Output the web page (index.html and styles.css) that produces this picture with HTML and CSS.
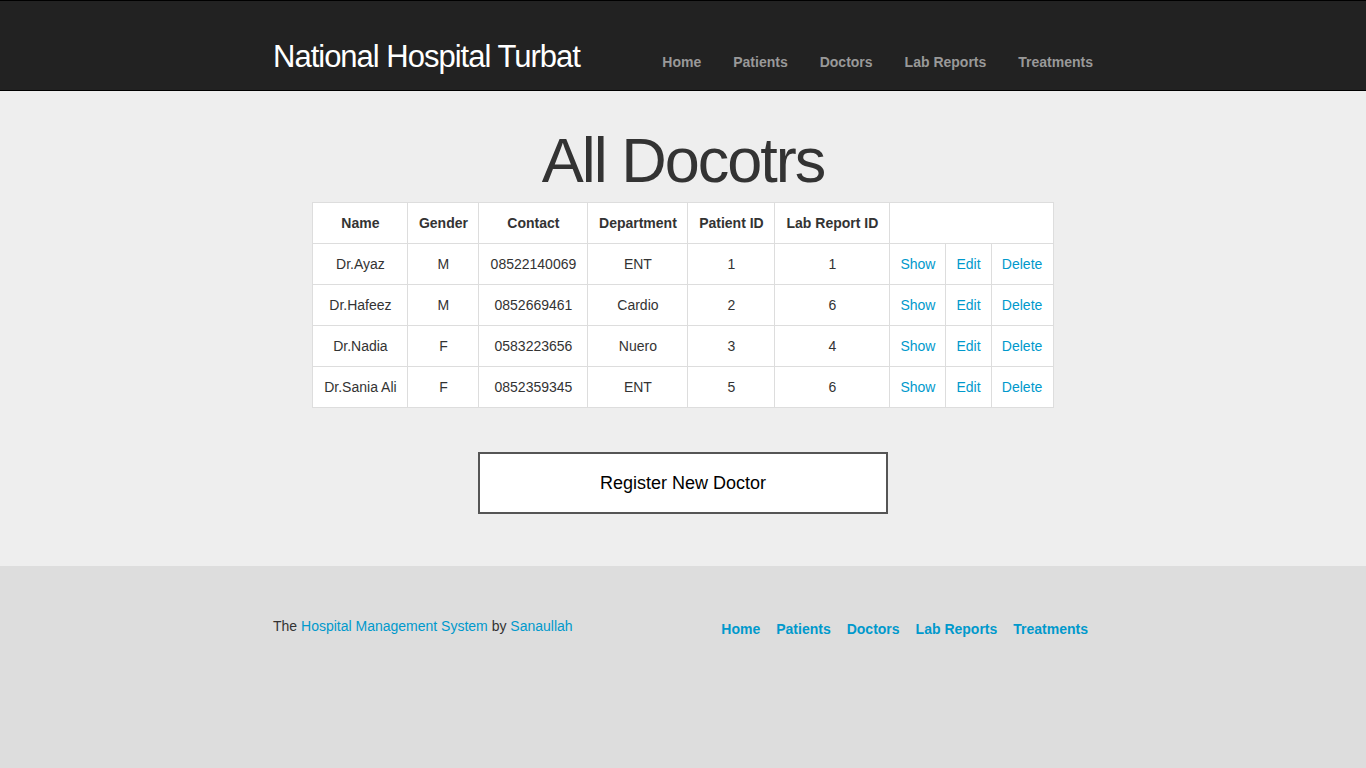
FILE: index.html
```html
<!DOCTYPE html>
<html lang="en">
<head>
<meta charset="utf-8">
<title>National Hospital Turbat</title>
<link rel="stylesheet" href="styles.css">
</head>
<body>
<header class="navbar">
  <div class="container navbar-inner">
    <a class="logo" href="#">National Hospital Turbat</a>
    <nav class="nav" aria-label="Main">
      <a href="#">Home</a>
      <a href="#">Patients</a>
      <a href="#">Doctors</a>
      <a href="#">Lab Reports</a>
      <a href="#">Treatments</a>
    </nav>
  </div>
</header>
<main class="hero">
  <h1>All Docotrs</h1>
  <table class="doctors">
    <colgroup>
      <col class="col-name"><col class="col-gender"><col class="col-contact"><col class="col-department"><col class="col-patient"><col class="col-report"><col class="col-show"><col class="col-edit"><col class="col-delete">
    </colgroup>
    <thead>
      <tr><th>Name</th><th>Gender</th><th>Contact</th><th>Department</th><th>Patient ID</th><th>Lab Report ID</th><th colspan="3"></th></tr>
    </thead>
    <tbody>
      <tr><td>Dr.Ayaz</td><td>M</td><td>08522140069</td><td>ENT</td><td>1</td><td>1</td><td><a href="#">Show</a></td><td><a href="#">Edit</a></td><td><a href="#">Delete</a></td></tr>
      <tr><td>Dr.Hafeez</td><td>M</td><td>0852669461</td><td>Cardio</td><td>2</td><td>6</td><td><a href="#">Show</a></td><td><a href="#">Edit</a></td><td><a href="#">Delete</a></td></tr>
      <tr><td>Dr.Nadia</td><td>F</td><td>0583223656</td><td>Nuero</td><td>3</td><td>4</td><td><a href="#">Show</a></td><td><a href="#">Edit</a></td><td><a href="#">Delete</a></td></tr>
      <tr><td>Dr.Sania Ali</td><td>F</td><td>0852359345</td><td>ENT</td><td>5</td><td>6</td><td><a href="#">Show</a></td><td><a href="#">Edit</a></td><td><a href="#">Delete</a></td></tr>
    </tbody>
  </table>
  <a class="register" href="#">Register New Doctor</a>
</main>
<footer class="footer">
  <div class="container footer-inner">
    <p class="credit">The <a href="#">Hospital Management System</a> by <a href="#">Sanaullah</a></p>
    <nav class="footer-nav" aria-label="Footer">
      <a href="#">Home</a>
      <a href="#">Patients</a>
      <a href="#">Doctors</a>
      <a href="#">Lab Reports</a>
      <a href="#">Treatments</a>
    </nav>
  </div>
</footer>
</body>
</html>
```

FILE: styles.css
```css
* {
  box-sizing: border-box;
}

body {
  display: flex;
  flex-direction: column;
  min-height: 100vh;
  margin: 0;
  background: #ddd;
  color: #333;
  font-family: "Liberation Sans", Arial, sans-serif;
  font-size: 14px;
  line-height: 20px;
}

a {
  color: #09c;
  text-decoration: none;
}

.container {
  display: flex;
  justify-content: space-between;
  width: 100%;
  max-width: 820px;
  margin: 0 auto;
}

.navbar {
  padding: 38px 0 16px;
  border-top: 1px solid #000;
  border-bottom: 1px solid #000;
  background: #222;
}

.navbar-inner {
  align-items: center;
}

.logo {
  color: #fff;
  font-size: 31px;
  line-height: 35px;
  letter-spacing: -1px;
}

.nav {
  display: flex;
  gap: 32px;
  padding-top: 10px;
  font-weight: bold;
}

.nav a {
  color: #999;
}

.hero {
  display: flex;
  flex-direction: column;
  align-items: center;
  padding: 36px 16px 52px;
  background: #eee;
}

h1 {
  margin: 0 0 9px;
  font-size: 63px;
  font-weight: normal;
  line-height: 66px;
  letter-spacing: -2px;
}

.doctors {
  border-collapse: collapse;
  background: #fff;
  text-align: center;
}

.doctors th,
.doctors td {
  padding: 10px;
  border: 1px solid #ddd;
}

.col-name {
  width: 95px;
}

.col-gender {
  width: 71px;
}

.col-contact {
  width: 109px;
}

.col-department {
  width: 100px;
}

.col-patient {
  width: 87px;
}

.col-report {
  width: 115px;
}

.col-show {
  width: 56px;
}

.col-edit {
  width: 45px;
}

.col-delete {
  width: 62px;
}

.register {
  width: 100%;
  max-width: 410px;
  margin-top: 44px;
  padding: 20px;
  border: 2px solid #555;
  background: #fff;
  color: #000;
  font-size: 18px;
  line-height: 18px;
  text-align: center;
}

.footer {
  padding: 50px 0;
}

.credit {
  margin: 0;
}

.footer-nav {
  display: flex;
  gap: 16px;
  padding: 3px 5px 0 0;
  font-weight: bold;
}
```
